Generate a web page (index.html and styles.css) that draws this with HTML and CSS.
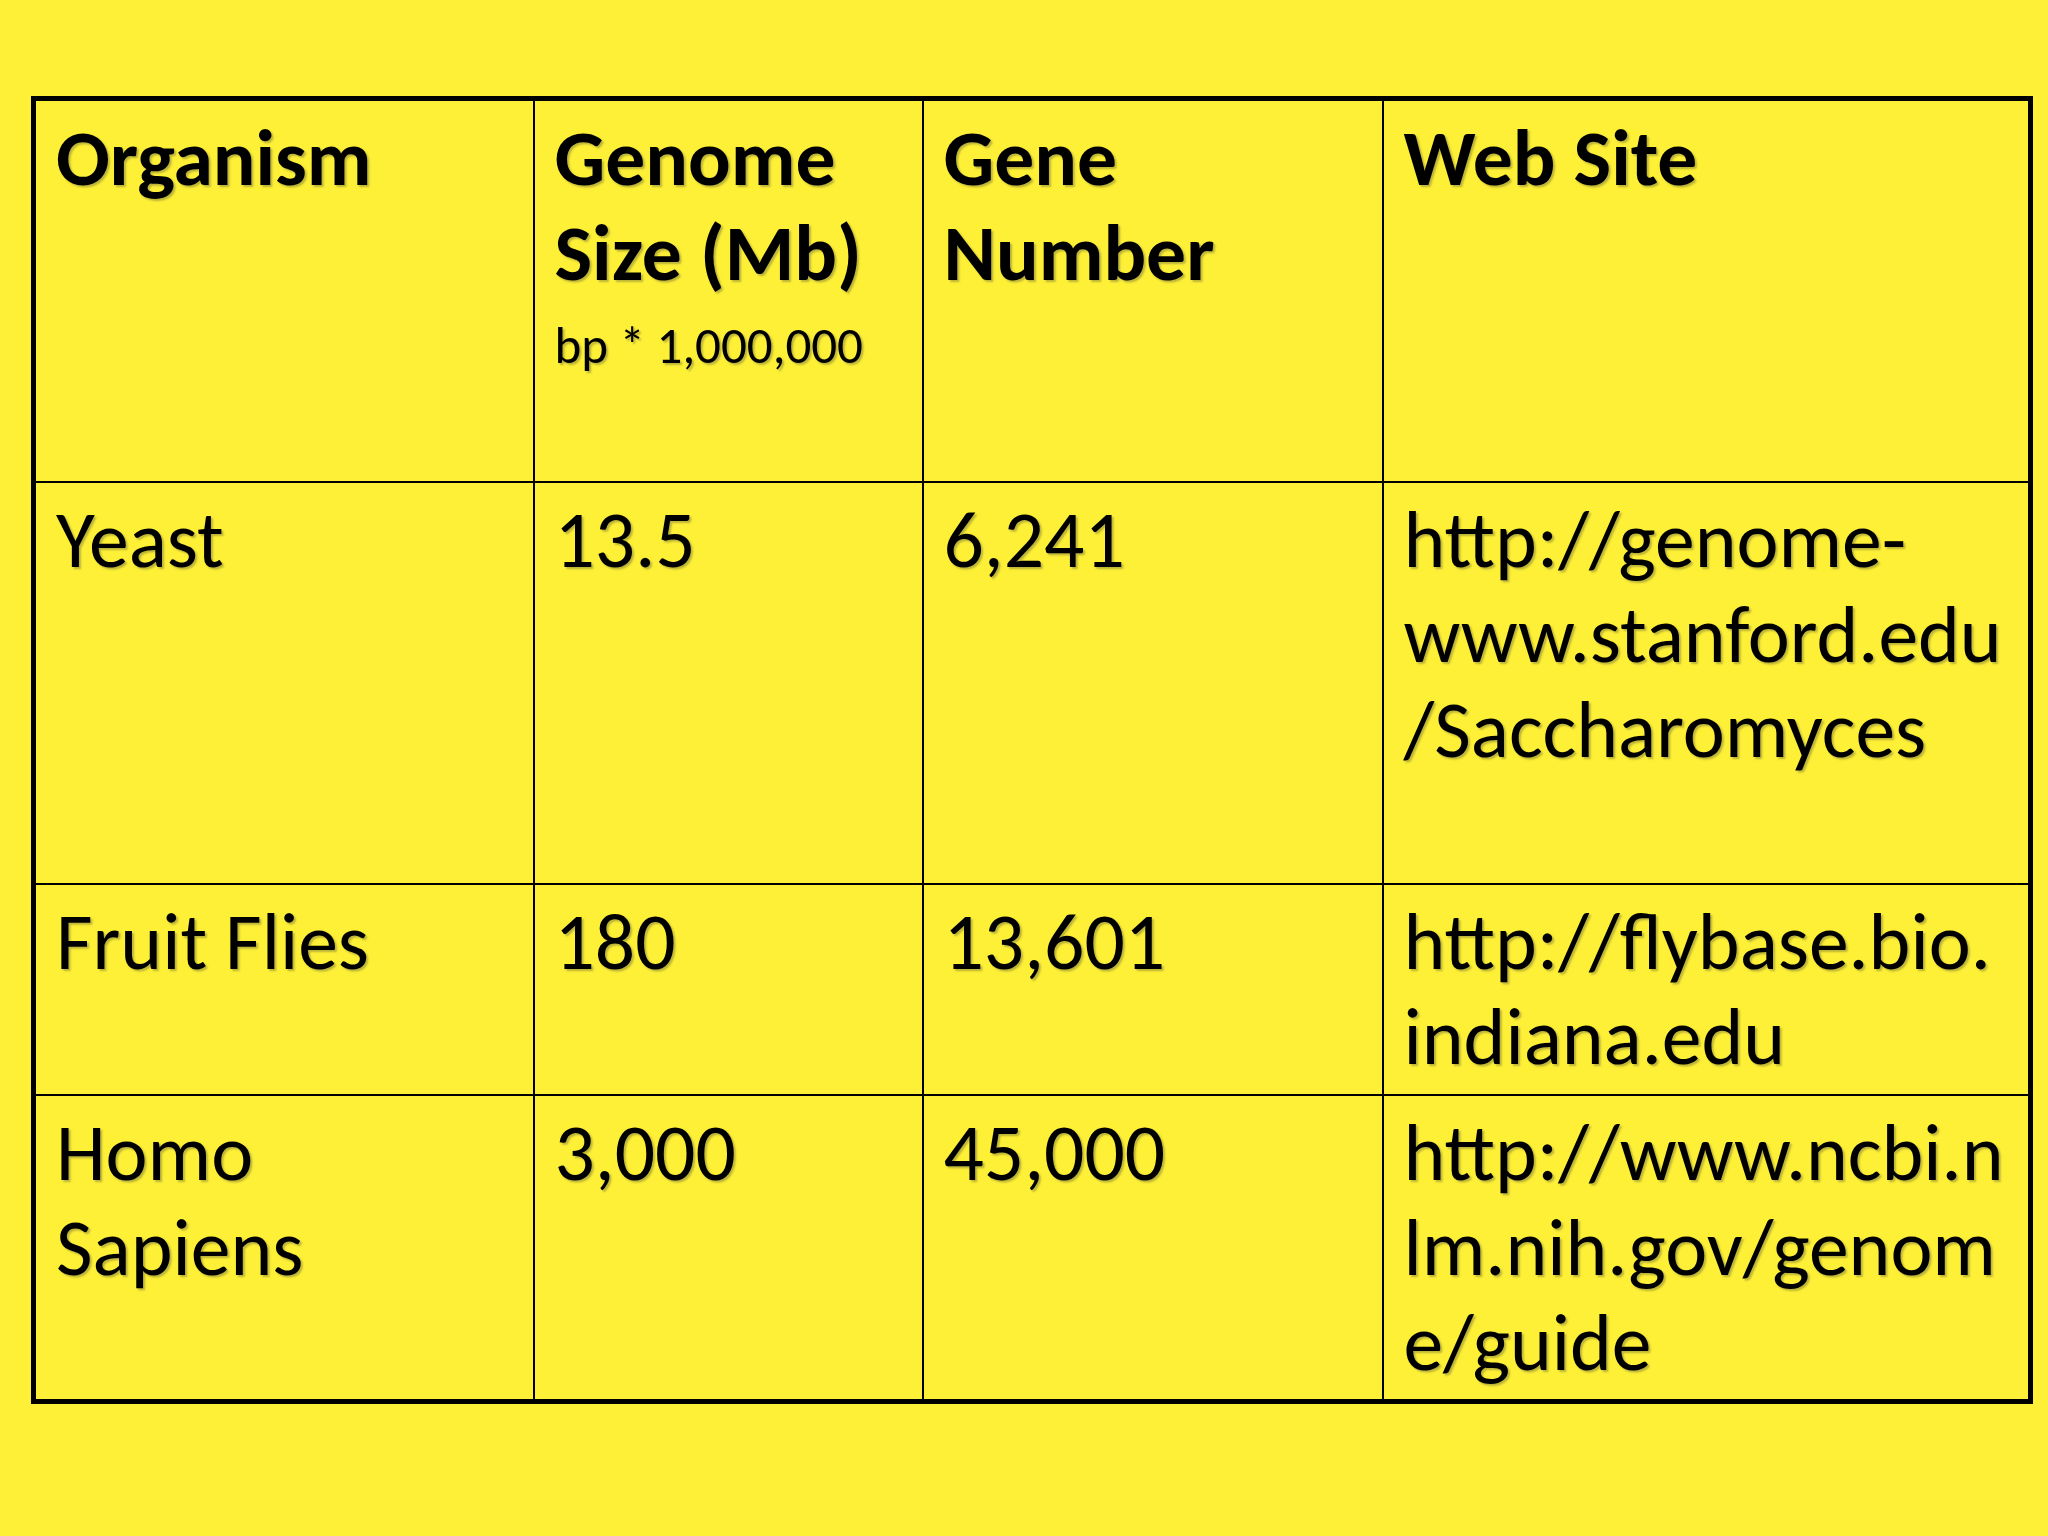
FILE: index.html
```html
<!DOCTYPE html>
<html>
<head>
<meta charset="utf-8">
<link rel="stylesheet" href="styles.css">
</head>
<body>
<main class="slide">
  <table class="genomes">
    <colgroup>
      <col class="c1"><col class="c2"><col class="c3"><col class="c4">
    </colgroup>
    <tr class="r-head">
      <th>Organism</th>
      <th>Genome<br>Size (Mb)<span class="sub">bp * 1,000,000</span></th>
      <th>Gene<br>Number</th>
      <th>Web Site</th>
    </tr>
    <tr class="r-yeast">
      <td>Yeast</td>
      <td>13.5</td>
      <td>6,241</td>
      <td>http://genome-<br>www.stanford.edu<br>/Saccharomyces</td>
    </tr>
    <tr class="r-fly">
      <td>Fruit Flies</td>
      <td>180</td>
      <td>13,601</td>
      <td>http://flybase.bio.<br>indiana.edu</td>
    </tr>
    <tr class="r-homo">
      <td>Homo<br>Sapiens</td>
      <td>3,000</td>
      <td>45,000</td>
      <td>http://www.ncbi.n<br>lm.nih.gov/genom<br>e/guide</td>
    </tr>
  </table>
</main>
</body>
</html>
```

FILE: styles.css
```css
html, body {
  margin: 0;
  padding: 0;
  background: #fef036;
}
.slide {
  width: 2048px;
  height: 1536px;
  padding: 96px 0 0 31px;
  box-sizing: border-box;
  font-family: Carlito, Lato, "Open Sans", sans-serif;
  color: #000;
}
.genomes {
  border-collapse: collapse;
  table-layout: fixed;
  width: 1997px;
  border: 5px solid #000;
}
.c1 { width: 500px; }
.c2 { width: 389px; }
.c3 { width: 460px; }
.c4 { width: 648px; }
.genomes th, .genomes td {
  border: 2.5px solid #000;
  vertical-align: top;
  text-align: left;
  padding: 9px 20px 0 20px;
  font-size: 79.6px;
  line-height: 95px;
  white-space: nowrap;
  text-shadow: 2px 2px 2px rgba(90, 90, 60, 0.4);
}
.genomes th {
  font-weight: bold;
}
.sub {
  display: block;
  font-weight: normal;
  font-size: 51px;
  line-height: 92px;
}
.r-head { height: 383px; }
.r-yeast { height: 402px; }
.r-fly { height: 211px; }
.r-homo { height: 307px; }
```
